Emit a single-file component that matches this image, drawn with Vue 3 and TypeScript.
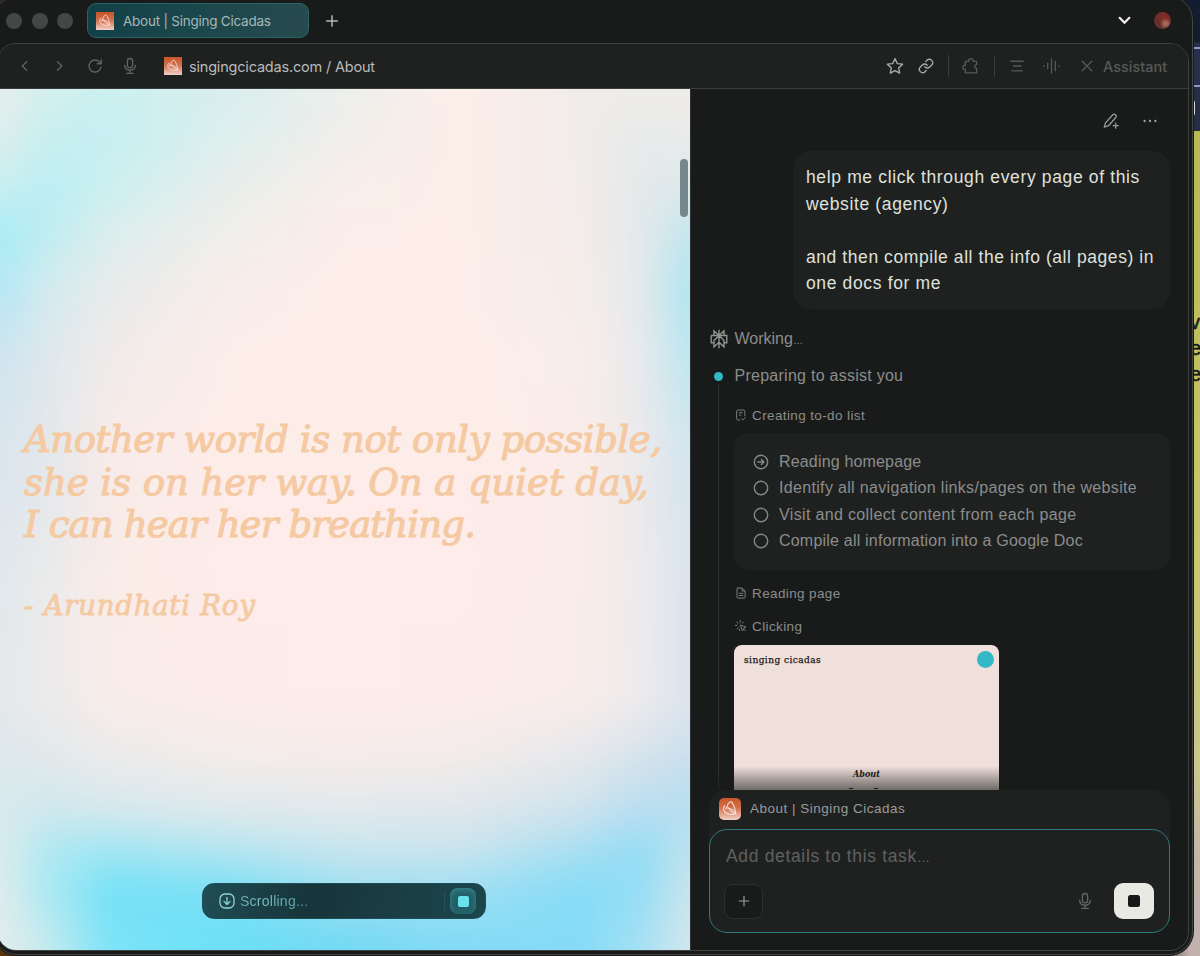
<script setup lang="ts">
const todos: { text: string; active: boolean; cls: string }[] = [
  { text: 'Reading homepage', active: true, cls: 't1' },
  { text: 'Identify all navigation links/pages on the website', active: false, cls: 't2' },
  { text: 'Visit and collect content from each page', active: false, cls: 't3' },
  { text: 'Compile all information into a Google Doc', active: false, cls: 't4' },
]

// Colour mesh of the page backdrop: column offsets, then one row of colours per vertical stop.
// The mesh overhangs the page by `bleed` on every side so its blur stays solid at the edges.
const bleed = 40
const cols = [2, 52, 112, 232, 347, 462, 582, 642, 692]
const mesh: [number, string][] = [
  [0, 'e6eeed d3f0ee ccf0f0 daeeed ecefec fdeee9 f0ecea efedeb efeceb'],
  [41, 'e0eeec c8eff0 c6eff1 dcefee f0eeeb fcede8 f0ecea e8eaea ebebea'],
  [101, 'c8eff0 baeef3 cdeff0 e9eeeb f8eeea fcede8 f2ecea e4e9ea dce9ec'],
  [141, 'a8ecf7 bfedf1 dceeed f0eeeb fbede9 fcede8 f3ecea e4e9eb c3e6ee'],
  [201, 'b5e7f5 d5ebee e8ebeb f8edea fdede8 fcede9 f5edea e6e9eb aee5f1'],
  [271, 'cfe4ef e0e8ec f1ebea fcede9 fdede9 fdede9 f8edea e9eaec bce6f0'],
  [361, 'dae5ed e4e8eb f8ebe9 fdede9 fdede9 fdede9 faece9 ebeaec d2e5ee'],
  [511, 'e2e8ed ecebeb faece8 fdece9 fdece9 fdece9 f9ece9 eeebec dbe3ee'],
  [611, 'e5e8eb ecebeb f8ecea fcece9 fdece9 fcece9 f8ecea eeebec dce3ed'],
  [671, 'dde9ec e2e9eb ebebeb f2ecea f5ebea f2ebea e5e8eb d5e2ec c8e0ee'],
  [721, 'd8eaed cfe8ee d6e8ed dfe9ec e2e9ec e0e7ec cfe3ed b8def0 b6def0'],
  [761, 'dcecec aee8f2 a2e6f3 b5e5f0 c8e5ee cbe4ee a9dff1 92dcf6 c0e2ee'],
  [801, 'e0ecec a8e9f3 74e1f6 7bdff5 a0dff2 a0dff3 85dcf7 94def5 cce5ed'],
  [861, 'e4ecec c5eaef 7ce3f7 6ae0f6 70d9f3 82daf6 86dbf7 a5e0f3 d5e7ed'],
]
const bands = mesh.map(([y, row], i) => {
  const prev = i ? mesh[i - 1][0] : 0
  const stops = row.split(' ').map((c, k) => `#${c} ${cols[k] + bleed}px`).join(', ')
  const mask = i ? `linear-gradient(transparent ${prev + bleed}px, #000 ${y + bleed}px)` : 'none'
  return { background: `linear-gradient(90deg, ${stops})`, maskImage: mask, webkitMaskImage: mask }
})
</script>

<template>
  <div class="desktop">
    <div class="behind">
      <span class="edge-line l1"></span>
      <span class="edge-line l2"></span>
      <span class="bracket"></span>
      <div class="yellow">
        <span class="peek">v</span>
        <span class="peek">e</span>
        <span class="peek">e</span>
      </div>
    </div>
    <svg class="defs" width="0" height="0">
      <defs>
        <linearGradient id="favGrad" x1="0" y1="0" x2="0" y2="1">
          <stop offset="0" stop-color="#c95527" />
          <stop offset="0.45" stop-color="#d3704d" />
          <stop offset="1" stop-color="#f0d2c8" />
        </linearGradient>
        <symbol id="cicada" viewBox="0 0 18 18">
          <rect width="18" height="18" fill="url(#favGrad)" />
          <g fill="none" stroke="#f8ddd2" stroke-width="0.9" stroke-linecap="round">
            <path d="M6.300 8.200C6.800 5.500 8.300 3.300 9.600 3c1.500.2 3.400 4.300 4.100 9.900" />
            <path d="M4.700 6.200c-1.500 1.900-.9 4 .4 5.300 1.600 1.600 5.200 2.600 8.600 1.400-1.900-3.400-4.700-5.300-8.200-4.600" />
            <path d="M7.600 7.900c.8 1.900 2.800 3.800 6.100 5" />
          </g>
        </symbol>
        <symbol id="mic" viewBox="0 0 18 18">
          <g fill="none" stroke="currentColor" stroke-width="1.35" stroke-linecap="round">
            <rect x="6.400" y="1.500" width="5.200" height="9.300" rx="2.600" />
            <path d="M3.600 8.300c.2 3 2.300 4.900 5.400 4.900s5.200-1.900 5.400-4.900M9 13.300v3M5.800 16.400h6.400" />
          </g>
        </symbol>
      </defs>
    </svg>

    <div class="window">
      <header class="tabbar">
        <div class="lights"><i></i><i></i><i></i></div>
        <div class="tab">
          <svg class="fav"><use href="#cicada" /></svg>
          <span>About | Singing Cicadas</span>
        </div>
        <svg class="plus" viewBox="0 0 14 14"><path d="M7 1.200v11.600M1.200 7h11.600" /></svg>
        <svg class="chev" viewBox="0 0 12 8"><path d="M1.500 1.500 6 6l4.500-4.500" /></svg>
        <span class="avatar"></span>
      </header>

      <div class="frame">
        <div class="toolbar">
          <svg class="ic" viewBox="0 0 18 18"><path d="M10.600 4.700 6.300 9l4.300 4.300" /></svg>
          <svg class="ic" viewBox="0 0 18 18"><path d="M6.500 4.700 10.800 9l-4.300 4.300" /></svg>
          <svg class="ic" viewBox="0 0 18 18"><path d="M14.900 10.200A6 6 0 1 1 13.300 4.800L15 6.500M15.200 2.700v4h-4" /></svg>
          <svg class="ic mic"><use href="#mic" /></svg>
          <svg class="fav"><use href="#cicada" /></svg>
          <span class="url">singingcicadas.com / About</span>
          <div class="actions">
            <svg class="ic lit star" viewBox="0 0 18 18"><path d="m9 1.600 2.250 4.950 5.350.65-3.950 3.700 1.050 5.300L9 13.550 4.300 16.200l1.050-5.300L1.400 7.200l5.350-.65z" /></svg>
            <svg class="ic lit link" viewBox="0 0 24 24"><path d="M10 13a5 5 0 0 0 7.540.54l3-3a5 5 0 0 0-7.070-7.070l-1.720 1.710M14 11a5 5 0 0 0-7.540-.54l-3 3a5 5 0 0 0 7.070 7.070l1.710-1.710" /></svg>
            <span class="sep"></span>
            <svg class="ic" viewBox="0 0 18 18"><path d="M3.300 4.400h3.400c-.6-3.700 4.900-3.700 4.300 0h3.600v3.300c-2.700-.4-2.700 3.900 0 3.500v4.600H3.300v-3.500c-3.200.9-3.200-4.800 0-4.100z" /></svg>
            <span class="sep"></span>
            <svg class="ic lines" viewBox="0 0 18 18"><path d="M2.800 4.200h12.400M5.500 9h7.500M3.800 13.800h10.400" /></svg>
            <svg class="ic wave" viewBox="0 0 20 18"><path d="M2 8.500v1M6 6v6M10 1.500v15M14 4v10M18 8.500v1" /></svg>
            <svg class="ic x" viewBox="0 0 18 18"><path d="m4.200 4.200 9.600 9.600M13.800 4.200l-9.600 9.600" /></svg>
            <span class="assist">Assistant</span>
          </div>
        </div>

        <div class="body">
          <main class="page">
            <div class="backdrop">
              <div class="mesh"><div v-for="(b, i) in bands" :key="i" class="band" :style="b"></div></div>
            </div>
            <blockquote class="quote">
              <p class="q1">Another world is not only possible,</p>
              <p class="q2">she is on her way. On a quiet day,</p>
              <p class="q3">I can hear her breathing.</p>
              <p class="author">- Arundhati Roy</p>
            </blockquote>
            <span class="thumb-bar"></span>
            <div class="pill">
              <svg class="down" viewBox="0 0 16 16"><rect x="1" y="1" width="14" height="14" rx="5" /><path d="M8 4.300v7M4.900 8.400 8 11.500l3.100-3.100" /></svg>
              <span class="scrolling">Scrolling...</span>
              <span class="pill-sep"></span>
              <span class="pill-stop"><i></i></span>
            </div>
          </main>

          <aside class="panel">
            <div class="feed">
              <div class="panel-head">
                <svg class="pen" viewBox="0 0 18 18"><path d="M2.300 15.200 3.500 10.900l7.300-8.100c1.800-1.700 4.600.8 3 2.700L6.500 13.700zM13.700 11.200v5M11.200 13.700h5" /></svg>
                <svg class="dots" viewBox="0 0 14 4"><circle cx="1.600" cy="2" r="1.150" /><circle cx="7" cy="2" r="1.150" /><circle cx="12.400" cy="2" r="1.150" /></svg>
              </div>
              <div class="bubble">
                <p>help me click through every page of this</p>
                <p>website (agency)</p>
                <p>&nbsp;</p>
                <p class="b3">and then compile all the info (all pages) in</p>
                <p>one docs for me</p>
              </div>
              <div class="working">
                <svg viewBox="0 0 18 20"><path d="M9 .8v18.400M9 6.500 4 1.800v4.700M9 6.500l5-4.700v4.700M1.200 6.500h15.600v7.200H14M1.200 6.500v7.200H4M9 6.500l-5 5v6.300l5-4.600M9 6.500l5 5v6.300l-5-4.600" /></svg>
                <span>Working<small>…</small></span>
              </div>
              <div class="timeline">
                <div class="rail"><span class="dot"></span></div>
                <div class="steps">
                  <div class="prep">Preparing to assist you</div>
                  <div class="step s1">
                    <svg viewBox="0 0 12 12"><path d="M4.600 11H3a1.400 1.400 0 0 1-1.400-1.400V2.400A1.400 1.400 0 0 1 3 1h5.400a1.400 1.400 0 0 1 1.400 1.400v4.400M4.200 3.700h3M4.200 6h1.800M6.500 9.700l1.300 1.300 2.700-2.700" /></svg>
                    <span>Creating to-do list</span>
                  </div>
                  <ul class="card">
                    <li v-for="t in todos" :key="t.text">
                      <svg viewBox="0 0 16 16"><circle cx="8" cy="8" r="6.700" /><path v-if="t.active" d="M4.800 8h6M8.400 5.500 10.900 8l-2.500 2.500" /></svg>
                      <span :class="t.cls">{{ t.text }}</span>
                    </li>
                  </ul>
                  <div class="step s2">
                    <svg viewBox="0 0 12 12"><path d="M2.900 1h4.200l3 3v6.200a.9.900 0 0 1-.9.900H2.900a.9.900 0 0 1-.9-.9V1.900A.9.900 0 0 1 2.900 1zM7 1.200V4h2.900M4.200 6.300h3.700M4.200 8.500h3.700" /></svg>
                    <span>Reading page</span>
                  </div>
                  <div class="step s3">
                    <svg viewBox="0 0 12 12"><path d="M5.600 5.200l5.400 2-2.300 1-1 2.500zM5.200.5v1.700M1.900 2l1.200 1.200M.3 5.300h1.800M8.600 2 7.500 3.200M1.900 9l1.200-1.300M9.400 9.400l1.200 1.200M4.600 9v1.700" /></svg>
                    <span>Clicking</span>
                  </div>
                  <div class="shot">
                    <div class="shot-head"><span>singing cicadas</span><i></i></div>
                    <span class="shot-title">About</span>
                    <span class="shot-next"><i></i><i></i></span>
                  </div>
                </div>
              </div>
            </div>

            <div class="composer">
              <div class="context">
                <svg class="fav big"><use href="#cicada" /></svg>
                <span>About | Singing Cicadas</span>
              </div>
              <div class="input">
                <span class="ph">Add details to this task<small>…</small></span>
                <div class="controls">
                  <span class="add"><svg viewBox="0 0 14 14"><path d="M7 1v12M1 7h12" /></svg></span>
                  <svg class="cmic"><use href="#mic" /></svg>
                  <span class="stop"><i></i></span>
                </div>
              </div>
            </div>
          </aside>
        </div>
      </div>
    </div>
  </div>
</template>

<style>
html, body { margin: 0; overflow: hidden; background: #2b211d; }
</style>

<style scoped>
* { box-sizing: border-box; }
p, ul, blockquote { margin: 0; padding: 0; }
svg { display: block; flex: none; }
.defs { position: absolute; }
.desktop {
  position: relative; width: 1200px; height: 956px; overflow: hidden;
  background: linear-gradient(90deg, #5b3510 0, #33251f 40px, #2d2523 1150px, #c3b1ad 1190px);
  font-family: "Liberation Sans", Arial, sans-serif;
}
.behind {
  position: absolute; right: 0; top: 0; width: 30px; height: 940px;
  background: linear-gradient(#141c30 0 42px, #27304a 43px 86px, #262e44 87px 131px, #c0b5b4 131px);
}
.edge-line { position: absolute; left: 0; width: 30px; height: 2px; background: #8d98c8; }
.l1 { top: 47px; } .l2 { top: 85px; }
.bracket { position: absolute; left: 20px; top: 100px; width: 5px; height: 16px; border: 2px solid #d6d7df; border-left: 0; border-radius: 0 3px 3px 0; }
.yellow {
  position: absolute; left: 0; top: 131px; width: 30px; height: 809px; padding: 178px 0 0 20px;
  background: linear-gradient(#b9b953 0, #c8c76c 420px, #c9c78d 640px, #c3b6a8 720px, #c3b3b0);
}
.peek { display: block; height: 26px; line-height: 26px; font-size: 20px; color: #17190f; -webkit-text-stroke: 0.5px #17190f; }
.window {
  position: absolute; left: -7px; top: -4px; width: 1200px; height: 959px; padding: 3px 0 0 6px;
  border: 1px solid #454746; border-radius: 24px; background: #191b1a;
  box-shadow: 0 0 0 1px #1b1918;
}
.tabbar { display: flex; align-items: center; height: 43px; padding: 0 22px 2px 6px; }
.lights { display: flex; gap: 9.500px; width: 81px; }
.lights i { width: 16px; height: 16px; border-radius: 50%; background: #454746; }
.tab {
  display: flex; align-items: center; gap: 9px; width: 222px; height: 35px; padding-left: 8px;
  border: 1px solid #2c6463; border-radius: 9px; background: linear-gradient(100deg, #124047, #1a474c 45%, #274a4e);
  color: #a5b7b7; font: 13.500px "Inter", sans-serif; letter-spacing: -0.24px; white-space: nowrap;
}
.fav { width: 18px; height: 18px; }
.plus { width: 14px; height: 14px; margin-left: 16px; stroke: #b5b7b6; stroke-width: 1.5; fill: none; }
.chev { width: 13px; height: 9px; margin-left: auto; stroke: #f2f2f2; stroke-width: 2; fill: none; stroke-linecap: round; }
.avatar { width: 17px; height: 17px; margin: 0 -1px 0 23px; border-radius: 50%; background: radial-gradient(ellipse at 68% 68%, #a8695a 0 10%, transparent 34%), radial-gradient(circle at 60% 30%, #8a2b25, #61302b 60%, #7e322b); }
.frame {
  display: flex; flex-direction: column; width: 1192px; height: 908px; margin-left: -3px;
  border: 1px solid #404241; border-radius: 19px; overflow: hidden; background: #191b1a;
}
.toolbar { display: flex; align-items: center; flex: none; height: 45px; padding: 0 20px 0 18px; border-bottom: 1px solid #3a3c3b; background: #1f2120; color: #606261; }
.ic { width: 18px; height: 18px; fill: none; stroke: currentColor; stroke-width: 1.35; stroke-linecap: round; stroke-linejoin: round; }
.toolbar > .ic { margin-right: 17px; }
.toolbar > .mic { margin-right: 25px; stroke: none; }
.url { margin-left: 7px; color: #b9bbba; font: 14.5px "Inter", sans-serif; letter-spacing: -0.19px; white-space: nowrap; }
.actions { display: flex; align-items: center; margin-left: auto; color: #575958; }
.lit { color: #aaacab; }
.link { margin-left: 14px; width: 16px; height: 16px; stroke-width: 2; }
.sep { width: 1px; height: 22px; margin: 0 13px 0 14px; background: #3b3d3c; }
.wave { width: 19px; margin-left: 16px; }
.x { margin: 0 6px 0 17px; }
.assist { width: 66px; padding-left: 1px; font: 500 14.5px "Inter", sans-serif; white-space: nowrap; }
.body { display: flex; flex: 1; min-height: 0; }
.page { position: relative; flex: none; width: 693px; padding: 330px 0 0 26px; border-right: 1px solid #303231; }
.backdrop { position: absolute; inset: 0; overflow: hidden; }
.mesh { position: absolute; inset: -40px; filter: blur(14px); }
.band { position: absolute; inset: 0; }
.quote { position: relative; font-family: "DejaVu Serif", serif; font-style: italic; color: #f5caa3; white-space: nowrap; -webkit-text-stroke: 1.200px #f5caa3; }
.quote p { height: 42.5px; line-height: 42.500px; font-size: 37px; }
.quote .q1 { letter-spacing: -0.43px; }
.quote .q2 { letter-spacing: -0.05px; }
.quote .q3 { letter-spacing: -0.85px; }
.quote .author { height: 40px; margin-top: 38px; line-height: 40px; font-size: 27.500px; letter-spacing: 0.800px; -webkit-text-stroke-width: 0.900px; }
.thumb-bar { position: absolute; right: 2px; top: 70px; width: 8px; height: 58px; border-radius: 4px; background: #75868c; }
.pill {
  position: absolute; left: 204px; top: 794px; display: flex; align-items: center; width: 284px; height: 36px; padding: 0 9px 0 16px;
  border: 1px solid #1b5059; border-radius: 12px; background: linear-gradient(100deg, #204d54 0, #17343a 38%, #1a3d43 65%, #1b464c);
}
.down { width: 16px; height: 16px; fill: none; stroke: #8fd5da; stroke-width: 1.300; stroke-linecap: round; stroke-linejoin: round; }
.scrolling { margin-left: 5px; font-size: 14px; letter-spacing: 0.250px; background: linear-gradient(90deg, #67a7ad, #7fc3c9 30%, #4d98a0); background-clip: text; -webkit-background-clip: text; color: transparent; }
.pill-sep { width: 1px; height: 21px; margin: 0 5px 0 auto; background: #255158; }
.pill-stop { display: grid; place-items: center; width: 26px; height: 26px; border-radius: 8px; background: #226068; box-shadow: inset 0 2px 5px #37848b; }
.pill-stop i { width: 11px; height: 11px; border-radius: 2px; background: #6be1ed; }
.panel { display: flex; flex-direction: column; flex: 1; min-width: 0; padding: 0 18px 17px; color: #8b8d8c; }
.feed { position: relative; height: 701px; overflow: hidden; flex: none; }
.feed::after { content: ""; position: absolute; inset: auto 0 0; height: 24px; background: linear-gradient(#191b1a00, #191b1a99); }
.panel-head { display: flex; align-items: center; justify-content: flex-end; height: 62px; padding: 1px 13px 0 0; }
.pen { width: 18px; height: 18px; fill: none; stroke: #999b9a; stroke-width: 1.300; stroke-linecap: round; stroke-linejoin: round; }
.dots { width: 14px; height: 4px; margin-left: 23px; fill: #a3a5a4; }
.bubble { width: 377px; height: 158px; margin-left: auto; padding: 13px 13px; border-radius: 18px; background: #1f2120; color: #dfe1dd; font-size: 17.500px; letter-spacing: 0.640px; line-height: 26.500px; white-space: nowrap; }
.bubble p { height: 26.500px; }
.bubble .b3 { letter-spacing: 0.570px; }
.working { display: flex; align-items: center; gap: 7px; height: 24px; margin-top: 17px; padding: 1px 0 0 1px; font-size: 16px; }
.working small { font-size: 10px; }
.working svg { width: 18px; height: 20px; margin-right: -0.500px; fill: none; stroke: #919392; stroke-width: 1.400; }
.timeline { display: flex; gap: 16px; margin-top: 14px; }
.rail { position: relative; display: flex; justify-content: center; width: 18px; height: 425px; margin-right: -9px; padding-top: 8px; background: linear-gradient(#303231, #303231) 9px 20px / 1px 405px no-repeat; }
.dot { width: 9px; height: 9px; border-radius: 50%; background: #32b8c6; }
.steps { flex: 1; }
.prep { height: 24px; line-height: 24px; padding-left: 0.500px; font-size: 16px; letter-spacing: 0.260px; }
.step { display: flex; align-items: center; gap: 5px; height: 20px; padding-left: 1px; font-size: 13.500px; letter-spacing: 0.380px; white-space: nowrap; }
.step svg { width: 12px; height: 12px; fill: none; stroke: #7b7d7c; stroke-width: 1; stroke-linecap: round; stroke-linejoin: round; }
.s1 { margin-top: 17px; }
.card { height: 137px; margin-top: 8px; padding: 15.500px 19px; border-radius: 14px; background: #1f2120; list-style: none; font-size: 16px; }
.card li { display: flex; align-items: center; gap: 10px; height: 26.500px; line-height: 26.500px; white-space: nowrap; }
.card svg { width: 16px; height: 16px; fill: none; stroke: #868887; stroke-width: 1.400; stroke-linecap: round; stroke-linejoin: round; }
.t1 { letter-spacing: 0.170px; }
.t2 { letter-spacing: 0.330px; }
.t3 { letter-spacing: 0.350px; }
.t4 { letter-spacing: 0.210px; }
.s2 { margin-top: 13px; }
.s3 { margin-top: 13px; }
.shot { display: flex; flex-direction: column; align-items: center; width: 265px; height: 150px; margin-top: 9px; border-radius: 8px 8px 0 0; background: #f0e0dc; color: #1c1817; font-family: "DejaVu Serif Condensed", "DejaVu Serif", serif; font-stretch: condensed; }
.shot-head { display: flex; align-items: center; justify-content: space-between; width: 100%; height: 28px; padding: 0 5px 0 10px; font-size: 10px; letter-spacing: 0.450px; -webkit-text-stroke: 0.250px #1c1817; }
.shot-head i { width: 17px; height: 17px; border-radius: 50%; background: #32b8c6; }
.shot-title { margin-top: 95px; font-size: 9px; line-height: 12px; font-style: italic; font-weight: 700; }
.shot-next { display: flex; justify-content: space-between; width: 29px; margin: 8px 7px 0 0; }
.shot-next i { width: 4px; height: 1px; background: #1c1817; }
.composer { width: 461px; height: 143px; border-radius: 18px; background: #1f2120; }
.context { display: flex; align-items: center; gap: 9px; height: 39px; padding: 0 0 2px 10px; font-size: 13.500px; letter-spacing: 0.500px; color: #999b9a; }
.big { width: 22px; height: 22px; margin-top: 1px; border-radius: 5px; }
.input { height: 104px; padding: 13px 15px 0; border: 1.500px solid #2d7c80; border-radius: 18px; background: #1f2120; }
.ph { display: block; height: 26px; line-height: 27px; padding-left: 1px; font-size: 17.500px; letter-spacing: 0.660px; color: #5f6160; white-space: nowrap; }
.ph small { font-size: 13px; }
.controls { display: flex; align-items: center; height: 36px; margin: 14px 0 0 -1px; }
.add { display: grid; place-items: center; width: 39px; height: 35px; border: 1px solid #2e302f; border-radius: 9px; background: #191b1a; }
.add svg { width: 12px; height: 12px; stroke: #999b9a; stroke-width: 1.400; fill: none; }
.cmic { width: 18px; height: 18px; margin-left: auto; color: #646665; }
.stop { display: grid; place-items: center; width: 40px; height: 36px; margin-left: 20px; border-radius: 9px; background: #e8e9e3; }
.stop i { width: 12px; height: 12px; border-radius: 2.500px; background: #171918; }
</style>
